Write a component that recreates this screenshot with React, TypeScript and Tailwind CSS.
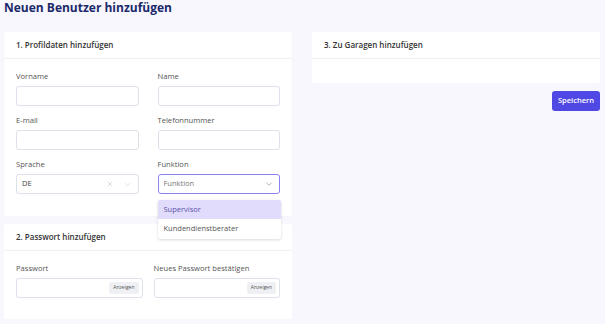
import { X, ChevronDown } from 'lucide-react';

const Label = ({ children }: { children: React.ReactNode }) => (
  <div className="text-[7.6px] text-[#555] mb-[4px] leading-[11px]">{children}</div>
);

const Input = () => (
  <div className="h-[20px] rounded-[3px] border border-[#dde1ea] bg-white" />
);

const CardHeader = ({ children }: { children: React.ReactNode }) => (
  <div className="h-[27px] px-[12px] flex items-center border-b border-[#f1f1f5] text-[8px] font-semibold text-[#333]">
    {children}
  </div>
);

const PasswordInput = () => (
  <div className="h-[20px] rounded-[3px] border border-[#dde1ea] bg-white flex items-center justify-end pr-[3px]">
    <span className="h-[12px] px-[4px] flex items-center rounded-[2px] bg-[#eef0f4] text-[5px] text-[#555]">Anzeigen</span>
  </div>
);

export default function App() {
  return (
    <div className="w-[605px] h-[324px] bg-[#f8f7fd] px-[4px] pt-0 overflow-hidden" style={{ fontFamily: '"Open Sans", sans-serif' }}>
      <h1 className="text-[12px] font-bold text-[#1b2a6b] leading-[15px] h-[32px]">Neuen Benutzer hinzufügen</h1>
      <div className="flex gap-[20px]">
        <div className="w-[288px] flex flex-col gap-[8px]">
          <div className="bg-white rounded-[3px] shadow-[0_0_2px_rgba(0,0,0,0.04)] h-[184px]">
            <CardHeader>1. Profildaten hinzufügen</CardHeader>
            <div className="px-[12px] pt-[12px] grid grid-cols-2 gap-x-[19px] gap-y-[9px]">
              <div>
                <Label>Vorname</Label>
                <Input />
              </div>
              <div>
                <Label>Name</Label>
                <Input />
              </div>
              <div>
                <Label>E-mail</Label>
                <Input />
              </div>
              <div>
                <Label>Telefonnummer</Label>
                <Input />
              </div>
              <div>
                <Label>Sprache</Label>
                <div className="h-[20px] rounded-[3px] border border-[#dde1ea] bg-white flex items-center pl-[5px] pr-[6px] text-[7.5px] text-[#444]">
                  <span className="flex-1">DE</span>
                  <X size={8} strokeWidth={1.5} className="text-[#bbb] mr-[9px]" />
                  <ChevronDown size={9} strokeWidth={1.5} className="text-[#ccc]" />
                </div>
              </div>
              <div className="relative">
                <Label>Funktion</Label>
                <div className="h-[20px] rounded-[3px] border border-[#8b80f0] bg-white flex items-center pl-[5px] pr-[5px] text-[7.5px] text-[#777]">
                  <span className="flex-1">Funktion</span>
                  <ChevronDown size={10} strokeWidth={1.5} className="text-[#888]" />
                </div>
                <div className="absolute z-10 left-0 right-[-1px] top-[41px] bg-white rounded-[2px] shadow-[0_1px_3px_rgba(0,0,0,0.15)] text-[7.5px] text-[#555]">
                  <div className="h-[19px] flex items-center pl-[6px] bg-[#e2dcfc] rounded-t-[2px] text-[#5a52a8]">Supervisor</div>
                  <div className="h-[20px] flex items-center pl-[6px]">Kundendienstberater</div>
                </div>
              </div>
            </div>
          </div>
          <div className="bg-white rounded-[3px] h-[95px]">
            <CardHeader>2. Passwort hinzufügen</CardHeader>
            <div className="px-[12px] pt-[12px] grid grid-cols-2 gap-x-[11px]">
              <div>
                <Label>Passwort</Label>
                <PasswordInput />
              </div>
              <div>
                <Label>Neues Passwort bestätigen</Label>
                <PasswordInput />
              </div>
            </div>
          </div>
        </div>
        <div className="w-[288px] flex flex-col items-end gap-[8px]">
          <div className="w-full bg-white rounded-[3px] h-[51px]">
            <CardHeader>3. Zu Garagen hinzufügen</CardHeader>
          </div>
          <button className="h-[20px] w-[48px] rounded-[3px] bg-[#5048e5] text-white text-[7.5px] font-semibold">Speichern</button>
        </div>
      </div>
    </div>
  );
}
